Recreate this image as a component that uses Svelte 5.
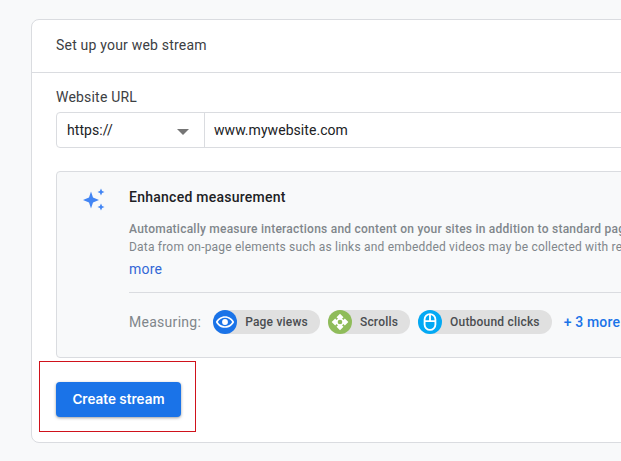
<script>
  const chips = [
    { label: 'Page views', color: '#1a73e8', icon: 'eye' },
    { label: 'Scrolls', color: '#8fbc5a', icon: 'scroll' },
    { label: 'Outbound clicks', color: '#03a9f4', icon: 'mouse' }
  ];
</script>

<div class="page">
  <div class="card">
    <div class="card-title">Set up your web stream</div>

    <div class="card-body">
      <div class="url-label">Website URL</div>
      <div class="url-row">
        <div class="protocol">
          <span>https://</span>
          <span class="caret"></span>
        </div>
        <div class="url-value">www.mywebsite.com</div>
      </div>

      <div class="measurement">
        <div class="sparkle">
          <svg width="24" height="24" viewBox="0 0 24 24">
            <path fill="#4285f4" d="M10 3.500l2 6 6 2.500-6 2.500-2 6-2-6-6-2.500 6-2.500z" />
            <path fill="#4285f4" d="M20 0.500l1.100 2.400 2.400 1.100-2.400 1.100L20 7.500l-1.100-2.400-2.400-1.100 2.400-1.100z" />
            <path fill="#4285f4" d="M20 15.500l1.100 2.400 2.400 1.100-2.400 1.100-1.100 2.400-1.100-2.400-2.400-1.100 2.400-1.100z" />
          </svg>
        </div>
        <div class="measurement-main">
          <div class="measurement-title">Enhanced measurement</div>
          <div class="measurement-desc">
            <div class="nowrap strong">Automatically measure interactions and content on your sites in addition to standard page view measurement.</div>
            <div class="nowrap">Data from on-page elements such as links and embedded videos may be collected with relevant events.</div>
          </div>
          <div class="more-link">more</div>
          <div class="measuring">
            <span class="measuring-label">Measuring:</span>
            {#each chips as chip}
              <div class="chip">
                <span class="chip-icon" style="background: {chip.color}">
                  {#if chip.icon === 'eye'}
                    <svg width="20" height="20" viewBox="0 0 24 24">
                      <path fill="#fff" fill-rule="evenodd" d="M12 5C7 5 2.800 7.900 1 12c1.800 4.100 6 7 11 7s9.200-2.900 11-7c-1.800-4.100-6-7-11-7zm0 12c-3.700 0-6.900-2-8.600-5C5.100 9 8.300 7 12 7s6.900 2 8.600 5c-1.700 3-4.900 5-8.600 5z" />
                      <circle cx="12" cy="12" r="3.500" fill="#fff" />
                    </svg>
                  {:else if chip.icon === 'scroll'}
                    <svg width="20" height="20" viewBox="0 0 24 24">
                      <path fill="#fff" fill-rule="evenodd" d="M12 2l4.200 4.200-1.800 1.800a5.200 5.200 0 0 1 1.600 1.600l1.800-1.800L22 12l-4.200 4.200-1.800-1.800a5.200 5.200 0 0 1-1.600 1.600l1.800 1.800L12 22l-4.200-4.200 1.800-1.800A5.200 5.200 0 0 1 8 14.400l-1.800 1.800L2 12l4.200-4.200L8 9.600A5.200 5.200 0 0 1 9.600 8L7.800 6.200zm0 7.200a2.800 2.800 0 1 0 0 5.600 2.800 2.800 0 0 0 0-5.600z" />
                    </svg>
                  {:else}
                    <svg width="20" height="20" viewBox="0 0 24 24">
                      <rect x="5.500" y="2.500" width="13" height="19" rx="6.500" fill="none" stroke="#fff" stroke-width="2.200" />
                      <path stroke="#fff" stroke-width="2.200" d="M12 3v7M6 11h12" />
                    </svg>
                  {/if}
                </span>
                <span class="chip-label">{chip.label}</span>
              </div>
            {/each}
            <span class="more-count">+ 3 more</span>
          </div>
        </div>
      </div>

      <div class="actions">
        <button class="create">Create stream</button>
      </div>
    </div>
  </div>
  <div class="highlight"></div>
</div>

<style>
  :global(body) {
    margin: 0;
    background: #f8f9fa;
    overflow: hidden;
  }

  .page {
    position: relative;
    width: 621px;
    height: 461px;
    padding: 19px 0 0 31px;
    box-sizing: border-box;
    overflow: hidden;
    font-family: Roboto, "Liberation Sans", sans-serif;
    color: #3c4043;
  }

  .card {
    width: 800px;
    height: 424px;
    box-sizing: border-box;
    background: #fff;
    border: 1px solid #dadce0;
    border-radius: 8px;
  }

  .card-title {
    height: 53px;
    box-sizing: border-box;
    padding: 0 24px 2px;
    display: flex;
    align-items: center;
    font-size: 14px;
    letter-spacing: 0.2px;
    color: #3c4043;
    border-bottom: 1px solid #dadce0;
  }

  .card-body {
    padding: 15px 24px 0;
  }

  .url-label {
    font-size: 14px;
    line-height: 18px;
    letter-spacing: 0.2px;
    color: #3c4043;
    margin-bottom: 6px;
  }

  .url-row {
    display: flex;
    height: 36px;
    box-sizing: border-box;
    border: 1px solid #dadce0;
    border-radius: 4px;
    font-size: 14px;
    letter-spacing: 0.05px;
    color: #202124;
  }

  .protocol {
    width: 148px;
    box-sizing: border-box;
    padding: 0 15px 0 10px;
    display: flex;
    align-items: center;
    justify-content: space-between;
    border-right: 1px solid #dadce0;
  }

  .caret {
    width: 0;
    height: 0;
    border-left: 6px solid transparent;
    border-right: 6px solid transparent;
    border-top: 6px solid #757575;
    margin-top: 3px;
  }

  .url-value {
    padding-left: 9px;
    display: flex;
    align-items: center;
  }

  .measurement {
    margin-top: 23px;
    height: 187px;
    box-sizing: border-box;
    display: flex;
    background: #f8f9fa;
    border: 1px solid #dadce0;
    border-radius: 4px;
  }

  .sparkle {
    width: 72px;
    flex: none;
    padding: 16px 0 0 24px;
    box-sizing: border-box;
  }

  .measurement-main {
    flex: 1;
    min-width: 0;
    padding-top: 16px;
  }

  .measurement-title {
    font-size: 14px;
    font-weight: 500;
    line-height: 18px;
    letter-spacing: 0.25px;
    color: #202124;
  }

  .measurement-desc {
    margin-top: 14px;
    font-size: 12px;
    line-height: 18px;
    letter-spacing: 0.2px;
    color: #80868b;
  }

  .nowrap {
    white-space: nowrap;
  }

  .strong {
    font-weight: 500;
    letter-spacing: 0.24px;
  }

  .more-link {
    margin-top: 3px;
    font-size: 14px;
    line-height: 20px;
    letter-spacing: 0.2px;
    color: #3367d6;
  }

  .measuring {
    margin-top: 13px;
    padding-top: 17px;
    border-top: 1px solid #dadce0;
    display: flex;
    align-items: center;
    white-space: nowrap;
  }

  .measuring-label {
    font-size: 14px;
    letter-spacing: 0.28px;
    color: #80868b;
    margin-right: 12px;
  }

  .chip {
    display: flex;
    align-items: center;
    height: 24px;
    border-radius: 12px;
    background: #e0e0e0;
    margin-right: 8px;
  }

  .chip-icon {
    width: 24px;
    height: 24px;
    border-radius: 50%;
    display: flex;
    align-items: center;
    justify-content: center;
  }

  .chip-label {
    font-size: 12px;
    font-weight: 500;
    letter-spacing: 0.2px;
    color: #4a4d50;
    padding: 0 12px 0 8px;
  }

  .more-count {
    margin-left: 4px;
    font-size: 14px;
    font-weight: 500;
    letter-spacing: 0.15px;
    color: #1a73e8;
  }

  .actions {
    margin-top: 24px;
  }

  .create {
    width: 125px;
    height: 35px;
    padding-bottom: 3px;
    border: 0;
    border-radius: 4px;
    background: #1a73e8;
    color: #fff;
    font-family: Inter, Roboto, sans-serif;
    font-size: 13.5px;
    font-weight: 600;
    box-shadow: 0 1px 3px rgba(60, 64, 67, 0.5);
  }

  .highlight {
    position: absolute;
    left: 39px;
    top: 361px;
    width: 157px;
    height: 71px;
    box-sizing: border-box;
    border: 1px solid #d0121b;
  }
</style>
